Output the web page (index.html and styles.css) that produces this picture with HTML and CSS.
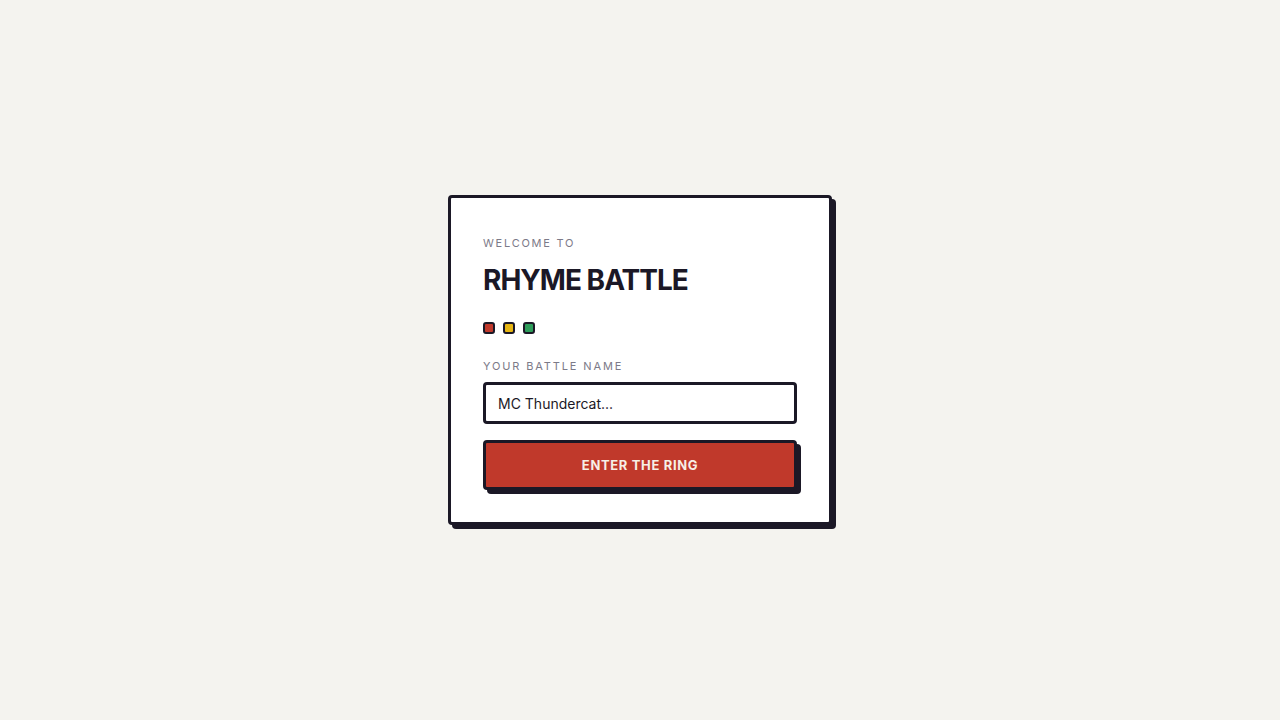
FILE: index.html
```html
<!DOCTYPE html>
<html lang="en">
<head>
<meta charset="utf-8">
<title>Rhyme Battle</title>
<link rel="stylesheet" href="styles.css">
</head>
<body>
<main class="stage">
  <section class="card">
    <p class="eyebrow">Welcome to</p>
    <h1 class="title">RHYME BATTLE</h1>
    <div class="dots">
      <span class="dot dot-red"></span>
      <span class="dot dot-yellow"></span>
      <span class="dot dot-green"></span>
    </div>
    <label class="label" for="name">Your battle name</label>
    <input class="input" id="name" type="text" placeholder="MC Thundercat...">
    <button class="btn" type="button">Enter the ring</button>
  </section>
</main>
</body>
</html>
```
FILE: styles.css
```css
* { box-sizing: border-box; }
html, body { margin: 0; padding: 0; }
body {
  background: #f4f3ef;
  font-family: "Inter", "Noto Sans", sans-serif;
  color: #1b1826;
}
.stage {
  width: 1280px;
  height: 720px;
  display: flex;
  align-items: center;
  justify-content: center;
}
.card {
  width: 384px;
  height: 330px;
  background: #ffffff;
  border: 3px solid #1b1826;
  border-radius: 4px;
  box-shadow: 4px 4px 0 #1b1826;
  padding: 36px 32px 32px;
  display: flex;
  flex-direction: column;
}
.eyebrow {
  margin: 0;
  font-size: 11px;
  line-height: 18px;
  letter-spacing: 0.16em;
  text-transform: uppercase;
  color: #7c7a88;
  font-weight: 400;
}
.title {
  margin: 11px 0 0;
  font-size: 28px;
  line-height: 34px;
  font-weight: 700;
  letter-spacing: -0.035em;
  color: #1b1826;
}
.dots {
  margin-top: 25px;
  display: flex;
  gap: 8px;
}
.dot {
  width: 12px;
  height: 12px;
  border: 2px solid #1b1826;
  border-radius: 3px;
}
.dot-red { background: #c0392b; }
.dot-yellow { background: #e6b512; }
.dot-green { background: #2e9d5a; }
.label {
  margin-top: 23px;
  font-size: 11px;
  line-height: 18px;
  letter-spacing: 0.17em;
  text-transform: uppercase;
  color: #7c7a88;
  font-weight: 400;
}
.input {
  margin-top: 7px;
  width: 100%;
  height: 42px;
  border: 3px solid #1b1826;
  border-radius: 4px;
  padding: 0 12px;
  font-family: inherit;
  font-size: 14px;
  color: #1b1826;
  background: #fff;
  outline: none;
}
.input::placeholder { color: #1b1826; opacity: 1; }
.btn {
  margin-top: 16px;
  width: 100%;
  height: 50px;
  border: 3px solid #1b1826;
  border-radius: 4px;
  background: #c0392b;
  box-shadow: 4px 4px 0 #1b1826;
  font-family: inherit;
  font-size: 13px;
  font-weight: 700;
  letter-spacing: 0.05em;
  text-transform: uppercase;
  color: #f7efe6;
  cursor: pointer;
}
```
